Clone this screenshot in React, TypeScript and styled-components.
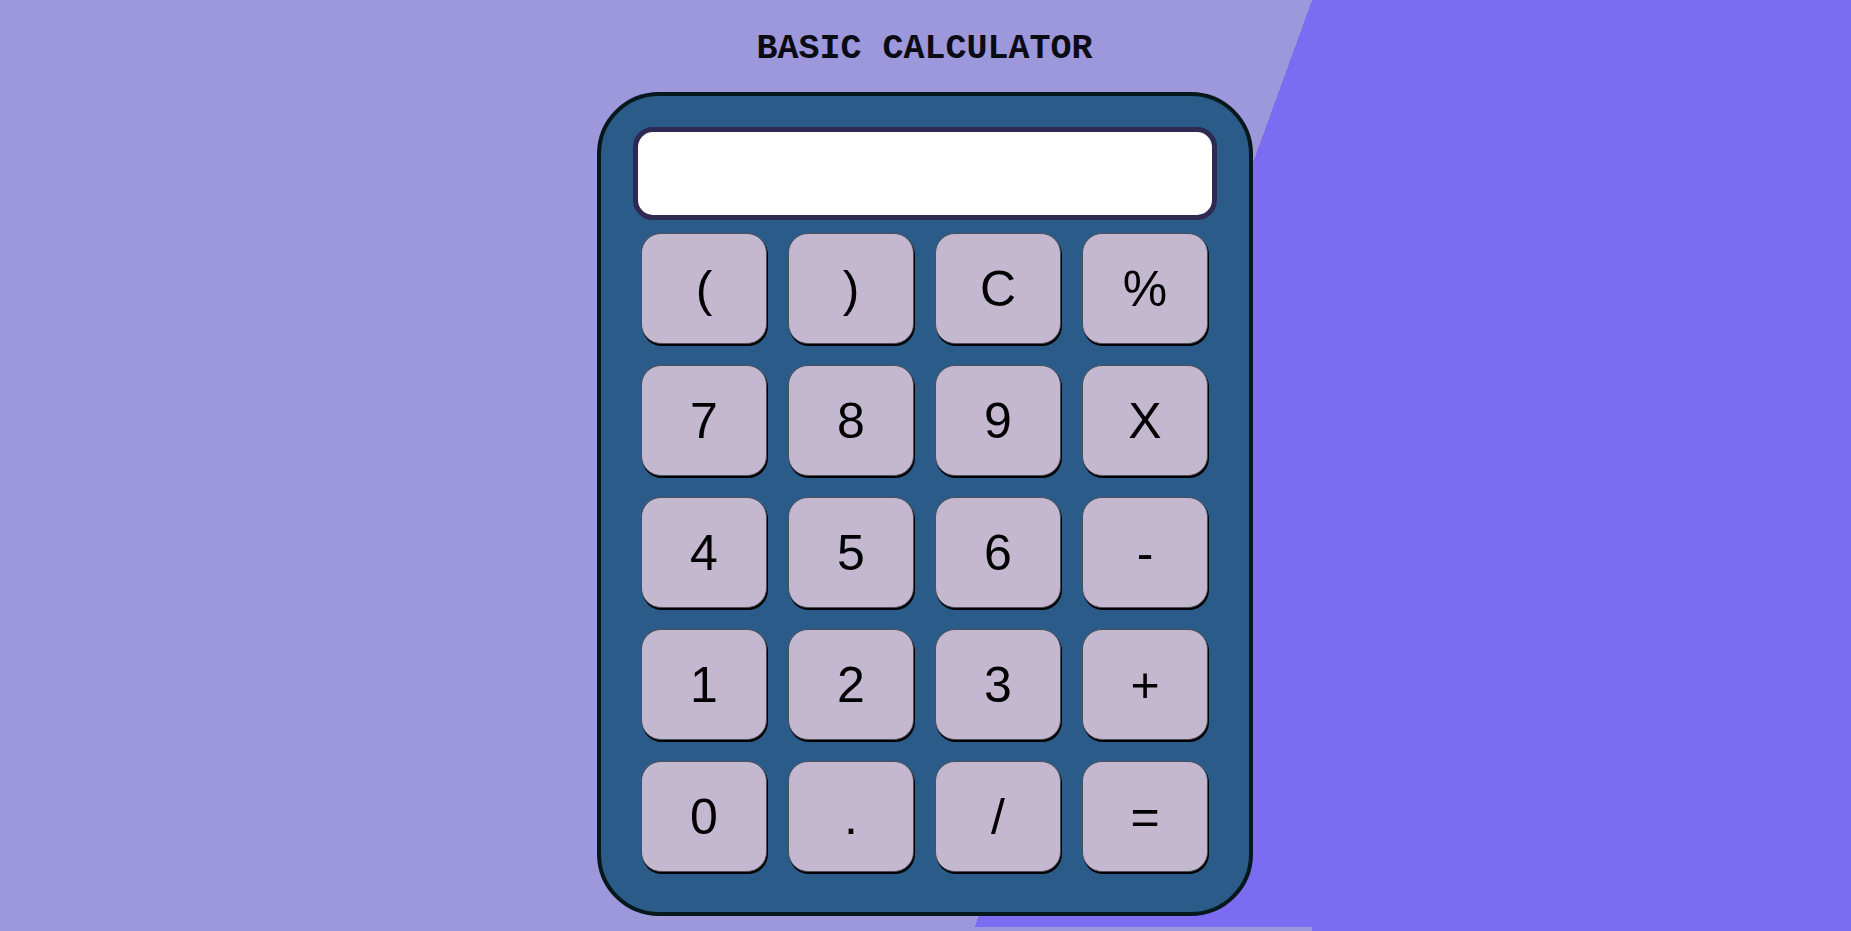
import React from "react";
import styled, { createGlobalStyle } from "styled-components";

const GlobalStyle = createGlobalStyle`
  html, body {
    margin: 0;
    padding: 0;
  }
  body {
    font-family: "Liberation Sans", Arial, sans-serif;
    overflow: hidden;
  }
`;

const Page = styled.div`
  width: 100%;
  height: 100vh;
  box-sizing: border-box;
  display: flex;
  flex-direction: column;
  align-items: center;
  padding-top: 29px;
  padding-right: 2px;
  background:
    linear-gradient(#7b6cf2, #7b6cf2) right top / 539px 100% no-repeat,
    linear-gradient(110deg, #9d97dc 1233px, #7b6cf2 1233px) left top / 100% 927px no-repeat,
    #9d97dc;
`;

const Title = styled.h1`
  margin: 0;
  font-family: "Liberation Mono", "Courier New", monospace;
  font-weight: 700;
  font-size: 35px;
  line-height: 40px;
  color: #0b0b14;
  letter-spacing: 0;
`;

const Calculator = styled.div`
  margin-top: 23px;
  width: 656px;
  height: 824px;
  box-sizing: border-box;
  border: 4px solid #06181c;
  border-radius: 62px;
  background: #2b5b88;
  padding: 31px 32px 0;
  display: flex;
  flex-direction: column;
  align-items: center;
`;

const Display = styled.div`
  width: 100%;
  height: 93px;
  box-sizing: border-box;
  border: 5px solid #2e2a52;
  border-radius: 20px;
  background: #ffffff;
`;

const Keypad = styled.div`
  margin-top: 13px;
  display: grid;
  grid-template-columns: repeat(4, 126px);
  grid-auto-rows: 111px;
  gap: 21px;
`;

const Key = styled.button`
  box-sizing: border-box;
  border: 1px solid #4d4d55;
  border-radius: 20px;
  background: #c4b8d1;
  box-shadow: 1px 2px 0 #000;
  font-family: "Liberation Sans", Arial, sans-serif;
  font-size: 50px;
  color: #000;
  display: flex;
  align-items: center;
  justify-content: center;
  padding: 0;
  cursor: pointer;
`;

const keys = [
  "(", ")", "C", "%",
  "7", "8", "9", "X",
  "4", "5", "6", "-",
  "1", "2", "3", "+",
  "0", ".", "/", "=",
];

export default function App() {
  return (
    <>
      <GlobalStyle />
      <Page>
        <Title>BASIC CALCULATOR</Title>
        <Calculator>
          <Display />
          <Keypad>
            {keys.map((k) => (
              <Key key={k}>{k}</Key>
            ))}
          </Keypad>
        </Calculator>
      </Page>
    </>
  );
}
